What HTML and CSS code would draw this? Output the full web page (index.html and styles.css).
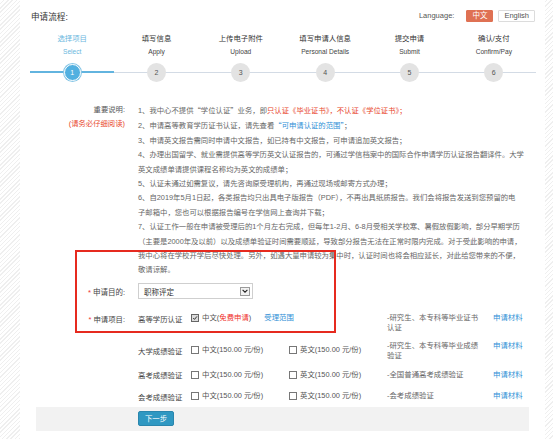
FILE: index.html
```html
<!DOCTYPE html>
<html lang="zh-CN">
<head>
<meta charset="utf-8">
<title>申请流程</title>
<link rel="stylesheet" href="styles.css">
</head>
<body>
<div class="page">
  <div class="header">
    <div class="title">申请流程:</div>
    <div class="lang">
      <span class="lang-label">Language:</span>
      <span class="lang-btn active">中文</span>
      <span class="lang-btn">English</span>
    </div>
  </div>

  <div class="steps">
    <div class="step active"><div class="step-cn">选择项目</div><div class="step-en">Select</div><div class="track"><span class="dot">1</span></div></div>
    <div class="step"><div class="step-cn">填写信息</div><div class="step-en">Apply</div><div class="track"><span class="dot">2</span></div></div>
    <div class="step"><div class="step-cn">上传电子附件</div><div class="step-en">Upload</div><div class="track"><span class="dot">3</span></div></div>
    <div class="step"><div class="step-cn">填写申请人信息</div><div class="step-en">Personal Details</div><div class="track"><span class="dot">4</span></div></div>
    <div class="step"><div class="step-cn">提交申请</div><div class="step-en">Submit</div><div class="track"><span class="dot">5</span></div></div>
    <div class="step"><div class="step-cn">确认/支付</div><div class="step-en">Confirm/Pay</div><div class="track"><span class="dot">6</span></div></div>
  </div>

  <div class="notes">
    <div class="notes-label">
      <div>重要说明:</div>
      <div class="red">(请务必仔细阅读)</div>
    </div>
    <div class="notes-text">
      <p>1、我中心不提供<span class="q">“</span>学位认证<span class="q">”</span>业务，即<span class="red">只认证《毕业证书》，不认证《学位证书》；</span></p>
      <p>2、申请高等教育学历证书认证，请先查看<span class="blue"><span class="q">“</span>可申请认证的范围<span class="q">”</span></span>；</p>
      <p>3、申请英文报告需同时申请中文报告，如已持有中文报告，可申请追加英文报告；</p>
      <p>4、办理出国留学、就业需提供高等学历英文认证报告的，可通过学信档案中的国际合作申请学历认证报告翻译件。大学<br>英文成绩单请提供课程名称均为英文的成绩单；</p>
      <p>5、认证未通过如需复议，请先咨询原受理机构，再通过现场或邮寄方式办理；</p>
      <p>6、自2019年5月1日起，各类报告均只出具电子版报告（PDF），不再出具纸质报告。我们会将报告发送到您预留的电<br>子邮箱中，您也可以根据报告编号在学信网上查询并下载；</p>
      <p>7、认证工作一般在申请被受理后的1个月左右完成，但每年1-2月、6-8月受相关学校寒、暑假放假影响，部分早期学历<br>（主要是2000年及以前）以及成绩单验证时间需要顺延，导致部分报告无法在正常时限内完成。对于受此影响的申请，<br>我中心将在学校开学后尽快处理。另外，如遇大量申请较为集中时，认证时间也将会相应延长，对此给您带来的不便，<br>敬请谅解。</p>
    </div>
  </div>

  <div class="purpose">
    <div class="flabel"><span class="star">*</span> 申请目的:</div>
    <div class="select">
      <span class="select-text">职称评定</span>
      <span class="select-arrow"><svg viewBox="0 0 10 10" width="8" height="8"><path d="M2 3.5 L5 6.5 L8 3.5" fill="none" stroke="#222" stroke-width="1.4"/></svg></span>
    </div>
  </div>

  <div class="items">
    <div class="irow r1">
      <div class="flabel"><span class="star">*</span> 申请项目:</div>
      <div class="name">高等学历认证</div>
      <div class="opt wide"><span class="cb checked"><svg viewBox="0 0 10 10" width="8" height="8"><path d="M2 5 L4.2 7.3 L8.3 2.3" fill="none" stroke="#222" stroke-width="1.5"/></svg></span>中文(<span class="hot">免费申请</span>)<span class="blue scope">受理范围</span></div>
      <div class="desc">-研究生、本专科等毕业证书认证</div>
      <div class="link">申请材料</div>
    </div>
    <div class="irow r2">
      <div class="flabel"></div>
      <div class="name">大学成绩验证</div>
      <div class="opt"><span class="cb"></span>中文(150.00 元/份)</div>
      <div class="opt"><span class="cb"></span>英文(150.00 元/份)</div>
      <div class="desc">-研究生、本专科等毕业成绩验证</div>
      <div class="link">申请材料</div>
    </div>
    <div class="irow r3">
      <div class="flabel"></div>
      <div class="name">高考成绩验证</div>
      <div class="opt"><span class="cb"></span>中文(150.00 元/份)</div>
      <div class="opt"><span class="cb"></span>英文(150.00 元/份)</div>
      <div class="desc">-全国普通高考成绩验证</div>
      <div class="link">申请材料</div>
    </div>
    <div class="irow r4">
      <div class="flabel"></div>
      <div class="name">会考成绩验证</div>
      <div class="opt"><span class="cb"></span>中文(150.00 元/份)</div>
      <div class="opt"><span class="cb"></span>英文(150.00 元/份)</div>
      <div class="desc">-会考成绩验证</div>
      <div class="link">申请材料</div>
    </div>
  </div>

  <div class="actions">
    <button class="next" type="button">下一步</button>
  </div>

  <div class="annot"></div>
</div>
</body>
</html>
```

FILE: styles.css
```css
html, body {
  margin: 0;
  padding: 0;
}
body {
  background: repeating-linear-gradient(-45deg, #ffffff 0 2px, #efefef 2px 3px);
  font-family: "Liberation Sans", "Noto Sans CJK SC", sans-serif;
  height: 439px;
  overflow: hidden;
}
.page {
  position: relative;
  margin-left: 20px;
  width: 525px;
  height: 439px;
  background: #fff;
  overflow: hidden;
}
.red { color: #e8462b; }
.blue { color: #2e8fd6; }
.q { font-family: "Noto Sans CJK SC", sans-serif; }

/* header */
.header {
  display: flex;
  justify-content: space-between;
  align-items: center;
  height: 31px;
  padding: 0 10px 0 11px;
}
.title {
  font-size: 8.6px;
  color: #333;
}
.lang {
  display: flex;
  align-items: center;
  font-size: 7.5px;
  color: #555;
}
.lang-label { margin-right: 7px; }
.lang-btn {
  box-sizing: border-box;
  height: 12px;
  line-height: 10px;
  padding: 0 5px;
  border: 1px solid #dcdcdc;
  border-radius: 1px;
  margin-left: 5px;
  color: #555;
}
.lang-btn.active {
  background: #df7153;
  border-color: #df7153;
  color: #fff;
}

/* steps */
.steps {
  display: flex;
  margin-left: 10px;
  width: 506px;
}
.step {
  flex: 1;
  text-align: center;
}
.step-cn {
  font-size: 7.4px;
  line-height: 15px;
  color: #333;
}
.step-en {
  font-size: 6.6px;
  line-height: 12px;
  color: #444;
}
.step.active .step-cn,
.step.active .step-en { color: #6ab7de; }
.track {
  position: relative;
  height: 20px;
  margin-top: 4px;
  display: flex;
  justify-content: center;
  align-items: center;
}
.track::before {
  content: "";
  position: absolute;
  left: 0;
  right: 0;
  top: 9.5px;
  height: 1px;
  background: #d3dbe5;
}
.step.active .track::before {
  background: #62b4df;
  height: 1.5px;
  top: 9.2px;
}
.dot {
  position: relative;
  width: 19px;
  height: 19px;
  border-radius: 50%;
  background: #e3e3e3;
  color: #555;
  font-size: 7px;
  line-height: 19px;
}
.step.active .dot {
  width: 15px;
  height: 15px;
  line-height: 15px;
  background: #52b0e0;
  color: #fff;
  border: 1px solid #fff;
  box-shadow: 0 0 0 1px #86c6e6;
}

/* notes */
.notes {
  display: grid;
  grid-template-columns: 118px 1fr;
  margin-top: 21px;
  font-size: 7.35px;
  line-height: 14.4px;
  color: #666;
}
.notes-label {
  text-align: right;
  padding-right: 13px;
  color: #555;
}
.notes-text p {
  margin: 0;
  white-space: nowrap;
}

/* form */
.flabel {
  box-sizing: border-box;
  text-align: right;
  padding-right: 13px;
  color: #444;
}
.star { color: #e33; }
.purpose {
  display: grid;
  grid-template-columns: 118px auto;
  justify-content: start;
  align-items: center;
  height: 17px;
  margin-top: 5px;
  font-size: 7.5px;
}
.select {
  box-sizing: border-box;
  width: 115px;
  height: 16px;
  border: 1px solid #cfcfcf;
  display: flex;
  align-items: center;
  justify-content: space-between;
  padding: 0 2px 0 5px;
  color: #333;
  background: #fff;
}
.select-arrow {
  box-sizing: border-box;
  width: 10px;
  height: 9px;
  border: 1px solid #9a9a9a;
  background: #f2f2f2;
  display: flex;
  align-items: center;
  justify-content: center;
}
.items {
  margin-top: 13px;
  font-size: 7.4px;
  line-height: 10px;
}
.irow {
  display: grid;
  grid-template-columns: 118px 53px 98px 98px 106px auto;
  align-items: start;
  color: #555;
}
.irow.r1 { height: 28.3px; }
.irow.r2 { height: 28.7px; }
.irow.r3 { height: 21px; }
.irow.r4 { height: 10px; }
.r1 .flabel, .r1 .name { padding-top: 1.7px; }
.r1 .opt { padding-top: 0.5px; }
.r2 .name { padding-top: 5.7px; }
.r2 .opt { padding-top: 3.7px; }
.r3 .name { padding-top: 1px; }
.r4 .name { padding-top: 2px; }
.name {
  color: #444;
  white-space: nowrap;
}
.opt {
  display: flex;
  align-items: center;
  white-space: nowrap;
  color: #555;
}
.opt.wide { grid-column: span 2; }
.cb {
  box-sizing: border-box;
  width: 8px;
  height: 8px;
  border: 1px solid #777;
  background: #fff;
  margin-right: 3px;
  display: flex;
  align-items: center;
  justify-content: center;
}
.cb.checked {
  background: #dcdcdc;
  border-color: #666;
}
.cb svg { display: block; }
.hot { color: #f0302a; }
.scope { margin-left: 13px; }
.desc {
  width: 97px;
  color: #666;
}
.link {
  color: #2e8fd6;
  white-space: nowrap;
}

/* actions */
.actions {
  margin: 6.3px 0 0 16px;
  width: 493px;
  height: 23.4px;
  background: #f2f2f2;
  display: flex;
  align-items: center;
  padding-left: 102px;
  box-sizing: border-box;
}
.next {
  width: 36px;
  height: 15px;
  padding: 0;
  border: 1px solid #2a86ad;
  border-radius: 2px;
  background: #2f98c2;
  color: #fff;
  font-family: inherit;
  font-size: 7.4px;
  line-height: 13px;
}

/* annotation box drawn over the content */
.annot {
  position: absolute;
  left: 55px;
  top: 250px;
  width: 261px;
  height: 83px;
  box-sizing: border-box;
  border: 2px solid #e62a1f;
  pointer-events: none;
}
```
